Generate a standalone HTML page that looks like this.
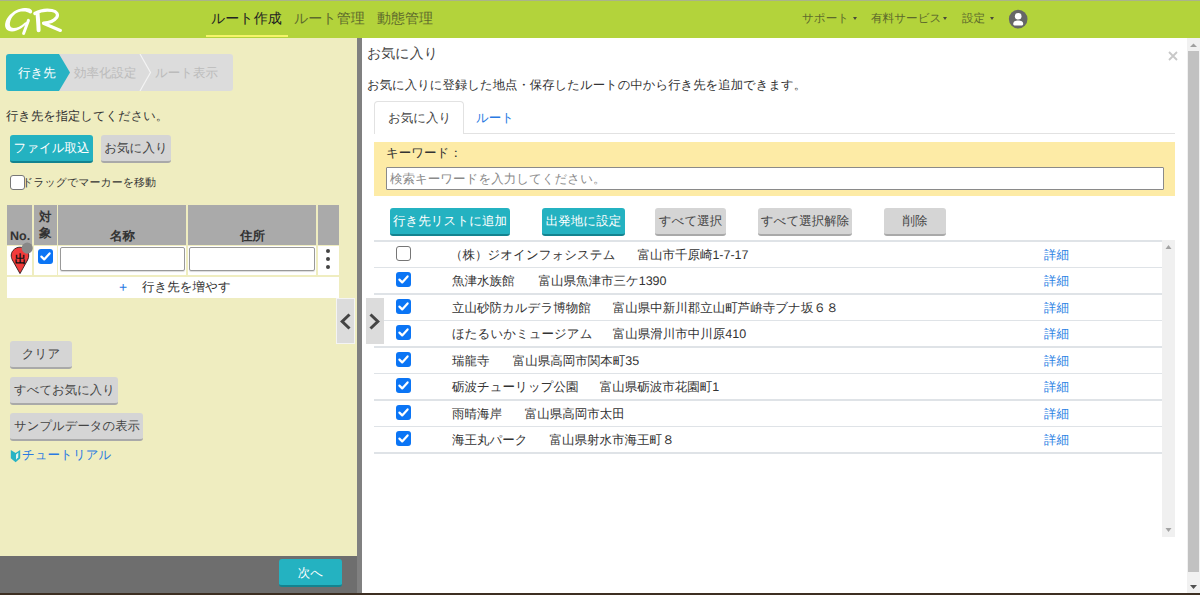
<!DOCTYPE html>
<html lang="ja">
<head>
<meta charset="utf-8">
<style>
*{box-sizing:border-box;margin:0;padding:0}
html,body{text-rendering:geometricPrecision;width:1200px;height:595px;overflow:hidden;background:#fff;font-family:"Liberation Sans",sans-serif;color:#333;font-size:13px}
.abs{position:absolute}
.t{position:absolute;white-space:nowrap;line-height:16px;font-size:12.5px}
#topline{left:0;top:0;width:1200px;height:1px;background:#aab38a}
#header{left:0;top:1px;width:1200px;height:37px;background:#b3d33b}
.nav{position:absolute;top:8px;font-size:14px;line-height:18px;white-space:nowrap}
.nav2{position:absolute;top:9.5px;font-size:11.6px;line-height:16px;white-space:nowrap;color:#5d6a2c}
.caret{position:absolute;top:16px;width:0;height:0;border-left:2.6px solid transparent;border-right:2.6px solid transparent;border-top:3.6px solid #4a4a3a}
#left{left:0;top:38px;width:357px;height:518px;background:#efedc0}
#divider{left:357px;top:38px;width:5px;height:555px;background:#808080}
#right{left:362px;top:38px;width:838px;height:555px;background:#fff}
#bottombar{left:0;top:556px;width:357px;height:37px;background:#6e6e6e}
#bottomline{left:0;top:593px;width:1200px;height:2px;background:#3d2f22}
.btn{position:absolute;border-radius:3px;white-space:nowrap;text-align:center;font-size:12.5px;line-height:16px}
.teal{background:#24b2c1;color:#fff;border-bottom:2px solid #13838f}
.gray{background:#d5d5d5;color:#444;border-bottom:2px solid #a9a9a9}
.cb{position:absolute;width:15px;height:15px;border-radius:3px;background:#0b75f5}
.cb svg{position:absolute;left:0;top:0}
.cbu{position:absolute;width:15px;height:15px;border-radius:3px;background:#fff;border:1px solid #767676}
.row{position:absolute;left:374px;width:788px;height:1.6px;background:#dfe3e7}
.link{color:#2b82e4}
</style>
</head>
<body>
<div id="topline" class="abs"></div>
<div id="header" class="abs">
  <svg class="abs" style="left:0;top:1px" width="70" height="36" viewBox="0 2 70 36">
    <g fill="none" stroke="#fff" stroke-linecap="round">
      <path d="M31.8,10.2 C30,7.2 24,7.4 18.5,9.3 C12,11.8 6.5,17 5.2,23.5 C4.5,27.5 6.5,31.4 12,31.4 C18,31.4 25,26 29.4,21.2 L25,22.4 C21,26 17,28 13.5,28 C10.5,28 9.4,25.5 10,22.6 C11,17 15.5,12.2 21,11.6 C25,11.2 27.5,11.8 29.6,13.2 C31.6,14 32.8,12 31.8,10.2 Z" fill="#fff" stroke="none"/>
      <path d="M28.4,20.4 L23.6,33.4" stroke-width="3"/>
      <path d="M37.6,14 C38,20 38.5,26 38.6,30.3" stroke-width="4"/>
      <path d="M34.8,13.5 C40,10.5 47,9.6 52,10.5 C57,11.5 58.6,14.5 56.6,17.5 C54,21 48,22.8 43.5,23" stroke-width="3.2"/>
      <path d="M44,23.6 L60.4,30.4" stroke-width="3.2"/>
    </g>
  </svg>
  <div class="nav" style="left:211px;color:#222">ルート作成</div>
  <div class="abs" style="left:206px;top:34px;width:82px;height:2px;background:#f5f56a"></div>
  <div class="nav" style="left:294px;color:#5d6a2c">ルート管理</div>
  <div class="nav" style="left:377px;color:#5d6a2c">動態管理</div>
  <div class="nav2" style="left:802px">サポート</div><div class="caret" style="left:853px"></div>
  <div class="nav2" style="left:871px">有料サービス</div><div class="caret" style="left:943px"></div>
  <div class="nav2" style="left:962px">設定</div><div class="caret" style="left:990px"></div>
  <svg class="abs" style="left:1008px;top:8px" width="20" height="20" viewBox="0 0 20 20">
    <circle cx="10.2" cy="10.1" r="9.3" fill="#666"/>
    <circle cx="10.2" cy="7.2" r="3.3" fill="#fff"/>
    <path d="M5.2,15 C5.2,12.2 7.4,11.4 10.2,11.4 C13,11.4 15.2,12.2 15.2,15 C15.2,16.2 14.2,16.6 13,16.6 L7.4,16.6 C6.2,16.6 5.2,16.2 5.2,15 Z" fill="#fff"/>
  </svg>
</div>

<div id="left" class="abs">
  <!-- stepper -->
  <svg class="abs" style="left:6px;top:16px" width="228" height="37" viewBox="0 0 228 37">
    <rect x="0" y="0" width="227" height="37" rx="3" fill="#dcdcdc"/>
    <path d="M3,0 L53,0 L64,18.5 L53,37 L3,37 Q0,37 0,34 L0,3 Q0,0 3,0 Z" fill="#27b3c4"/>
    <path d="M134,0 L144.5,18.5 L134,37" fill="none" stroke="#f4f4f4" stroke-width="1.2"/>
  </svg>
  <div class="t" style="left:18px;top:26.5px;color:#fff">行き先</div>
  <div class="t" style="left:74px;top:26.5px;color:#bbb">効率化設定</div>
  <div class="t" style="left:155px;top:26.5px;color:#bbb">ルート表示</div>

  <div class="t" style="left:6px;top:70px;color:#333;font-size:12.3px">行き先を指定してください。</div>
  <div class="btn teal" style="left:10px;top:97px;width:83px;height:28px;padding-top:5px">ファイル取込</div>
  <div class="btn gray" style="left:101px;top:97px;width:70px;height:28px;padding-top:5px">お気に入り</div>
  <div class="abs" style="left:10px;top:137px;width:15px;height:15px;border:1px solid #777;border-radius:3px;background:#fff"></div>
  <div class="t" style="left:22px;top:137px;font-size:11px;color:#333">ドラッグでマーカーを移動</div>

  <!-- table -->
  <div class="abs" style="left:7px;top:167px;width:332px;height:93px;background:#efedc0"></div>
  <div class="abs" style="left:7px;top:167px;width:25px;height:40px;background:#aaa"></div>
  <div class="abs" style="left:34px;top:167px;width:23px;height:40px;background:#aaa"></div>
  <div class="abs" style="left:58px;top:167px;width:128px;height:40px;background:#aaa"></div>
  <div class="abs" style="left:188px;top:167px;width:128px;height:40px;background:#aaa"></div>
  <div class="abs" style="left:318px;top:167px;width:21px;height:40px;background:#aaa"></div>
  <div class="t" style="left:10px;top:190px;font-weight:bold;color:#333">No.</div>
  <div class="t" style="left:39px;top:172px;font-weight:bold;color:#333;line-height:15.5px">対<br>象</div>
  <div class="t" style="left:110px;top:190px;font-weight:bold;color:#333">名称</div>
  <div class="t" style="left:240px;top:190px;font-weight:bold;color:#333">住所</div>

  <div class="abs" style="left:7px;top:208px;width:25px;height:29px;background:#fff"></div>
  <div class="abs" style="left:34px;top:208px;width:23px;height:29px;background:#fff"></div>
  <div class="abs" style="left:58px;top:208px;width:128px;height:29px;background:#fff"></div>
  <div class="abs" style="left:188px;top:208px;width:128px;height:29px;background:#fff"></div>
  <div class="abs" style="left:318px;top:208px;width:21px;height:29px;background:#fff"></div>
  <div class="abs" style="left:7px;top:239px;width:332px;height:21px;background:#fff"></div>

  <!-- pin -->
  <svg class="abs" style="left:9px;top:202px" width="26" height="36" viewBox="0 -4 26 36">
    <path d="M11,29.6 L3.4,16 C1.6,12.6 2,9 4,6.6 C6,4.2 8.4,3.2 11,3.2 C13.6,3.2 16,4.2 18,6.6 C20,9 20.4,12.6 18.6,16 Z" fill="#f23b3b" stroke="#2a1a1a" stroke-width="0.9"/>
    <text x="11.6" y="18.9" font-size="11.5" font-weight="bold" text-anchor="middle" fill="#111">出</text>
    <circle cx="18.2" cy="4.1" r="5.6" fill="#888"/>
  </svg>
  <div class="cb" style="left:38px;top:211px"><svg width="15" height="15" viewBox="0 0 15 15"><path d="M3.4,7.6 L6.2,10.4 L11.6,4.4" fill="none" stroke="#fff" stroke-width="2.2" stroke-linecap="round" stroke-linejoin="round"/></svg></div>
  <div class="abs" style="left:60px;top:209px;width:125px;height:24px;border:1px solid #999;border-radius:2px;background:#fff;box-shadow:0 1px 1px rgba(0,0,0,.15)"></div>
  <div class="abs" style="left:189px;top:209px;width:126px;height:24px;border:1px solid #999;border-radius:2px;background:#fff;box-shadow:0 1px 1px rgba(0,0,0,.15)"></div>
  <div class="abs" style="left:326px;top:211px;width:4px;height:4px;border-radius:50%;background:#444"></div>
  <div class="abs" style="left:326px;top:219px;width:4px;height:4px;border-radius:50%;background:#444"></div>
  <div class="abs" style="left:326px;top:227px;width:4px;height:4px;border-radius:50%;background:#444"></div>
  <div class="t" style="left:119px;top:241px;color:#2a7ae2;font-size:14px">+</div>
  <div class="t" style="left:142px;top:241px;color:#333">行き先を増やす</div>

  <!-- collapse arrow -->
  <div class="abs" style="left:336px;top:260px;width:19px;height:46px;background:#dcdcdc;border:1px solid #f4f4f4"></div>
  <svg class="abs" style="left:336px;top:260px" width="19" height="46" viewBox="0 0 19 46"><path d="M13.5,16.5 L6.2,23.5 L13.5,30.5" fill="none" stroke="#444" stroke-width="3"/></svg>

  <div class="btn gray" style="left:10px;top:303px;width:62px;height:28px;padding-top:5px">クリア</div>
  <div class="btn gray" style="left:10px;top:339px;width:108px;height:28px;padding-top:5px;padding-left:1px;font-size:12.4px">すべてお気に入り</div>
  <div class="btn gray" style="left:10px;top:375px;width:133px;height:28px;padding-top:5px;padding-left:1px;font-size:12.4px">サンプルデータの表示</div>
  <svg class="abs" style="left:10px;top:411px" width="11" height="14" viewBox="0 0 11 14">
    <path d="M0.8,1.1 L5.6,4.1 L10.2,1.1 L10.2,9.2 L5.6,13.2 L0.8,9.2 Z" fill="#27b3c4"/>
    <path d="M6,5.6 L8.4,3.6 L8.2,8.2 L6,10.7 Z" fill="#e2f4ee"/>
  </svg>
  <div class="t" style="left:22px;top:409px;color:#2a7ae2">チュートリアル</div>
</div>
<div id="bottombar" class="abs">
  <div class="btn teal" style="left:279px;top:3px;width:63px;height:28px;padding-top:6px">次へ</div>
</div>
<div id="divider" class="abs"></div>
<div id="right" class="abs">
  <div class="t" style="left:5px;top:6px;font-size:14px;line-height:18px;color:#444">お気に入り</div>
  <svg class="abs" style="left:806px;top:13px" width="10" height="10" viewBox="0 0 10 10"><path d="M1,1 L9,9 M9,1 L1,9" stroke="#c8c8c8" stroke-width="1.8"/></svg>
  <div class="t" style="left:5px;top:39px;color:#333;font-size:12.4px">お気に入りに登録した地点・保存したルートの中から行き先を追加できます。</div>
  <!-- tabs -->
  <div class="abs" style="left:12px;top:95px;width:801px;height:1px;background:#e2e2e2"></div>
  <div class="abs" style="left:12px;top:63px;width:90px;height:33px;background:#fff;border:1px solid #e2e2e2;border-bottom:none;border-radius:4px 4px 0 0"></div>
  <div class="t" style="left:26px;top:72px;color:#444">お気に入り</div>
  <div class="t" style="left:114px;top:72px;color:#2a7ae2">ルート</div>
  <!-- keyword box -->
  <div class="abs" style="left:12px;top:104px;width:801px;height:54px;background:#fdeba6"></div>
  <div class="t" style="left:24px;top:107px;color:#333">キーワード：</div>
  <div class="abs" style="left:24px;top:129px;width:778px;height:23px;background:#fff;border:1px solid #8a8a8a;border-radius:1px"></div>
  <div class="t" style="left:28px;top:133px;color:#8a8a8a">検索キーワードを入力してください。</div>
  <!-- action buttons -->
  <div class="btn teal" style="left:28px;top:170px;width:120px;height:28px;padding-top:5px">行き先リストに追加</div>
  <div class="btn teal" style="left:180px;top:170px;width:83px;height:28px;padding-top:5px">出発地に設定</div>
  <div class="btn gray" style="left:293px;top:170px;width:71px;height:28px;padding-top:5px">すべて選択</div>
  <div class="btn gray" style="left:396px;top:170px;width:94px;height:28px;padding-top:5px">すべて選択解除</div>
  <div class="btn gray" style="left:522px;top:170px;width:62px;height:28px;padding-top:5px">削除</div>
  <!-- list -->
  <div class="abs" style="left:800px;top:202px;width:13px;height:297px;background:#f0f0f0"></div>
  <svg class="abs" style="left:800px;top:202px" width="13" height="297" viewBox="0 0 13 297"><path d="M3.5,9 L9.5,9 L6.5,5 Z M3.5,288 L9.5,288 L6.5,292 Z" fill="#a3a3a3"/></svg>
  <div class="row" style="top:202.0px;left:12px"></div>
  <div class="cbu" style="left:34px;top:207.5px"></div>
  <div class="t" style="left:88px;top:208.5px;color:#333">（株）ジオインフォシステム</div><div class="t" style="left:275.4px;top:208.5px;color:#333">富山市千原崎1-7-17</div>
  <div class="t link" style="left:682px;top:208.5px">詳細</div>
  <div class="row" style="top:228.5px;left:12px"></div>
  <div class="cb" style="left:34px;top:234.0px"><svg width="15" height="15" viewBox="0 0 15 15"><path d="M3.4,7.6 L6.2,10.4 L11.6,4.4" fill="none" stroke="#fff" stroke-width="2.2" stroke-linecap="round" stroke-linejoin="round"/></svg></div>
  <div class="t" style="left:90px;top:235.0px;color:#333">魚津水族館</div><div class="t" style="left:176.4px;top:235.0px;color:#333">富山県魚津市三ケ1390</div>
  <div class="t link" style="left:682px;top:235.0px">詳細</div>
  <div class="row" style="top:255.0px;left:12px"></div>
  <div class="cb" style="left:34px;top:260.5px"><svg width="15" height="15" viewBox="0 0 15 15"><path d="M3.4,7.6 L6.2,10.4 L11.6,4.4" fill="none" stroke="#fff" stroke-width="2.2" stroke-linecap="round" stroke-linejoin="round"/></svg></div>
  <div class="t" style="left:90px;top:261.5px;color:#333">立山砂防カルデラ博物館</div><div class="t" style="left:250.8px;top:261.5px;color:#333">富山県中新川郡立山町芦峅寺ブナ坂６８</div>
  <div class="t link" style="left:682px;top:261.5px">詳細</div>
  <div class="row" style="top:281.5px;left:12px"></div>
  <div class="cb" style="left:34px;top:287.0px"><svg width="15" height="15" viewBox="0 0 15 15"><path d="M3.4,7.6 L6.2,10.4 L11.6,4.4" fill="none" stroke="#fff" stroke-width="2.2" stroke-linecap="round" stroke-linejoin="round"/></svg></div>
  <div class="t" style="left:90px;top:288.0px;color:#333">ほたるいかミュージアム</div><div class="t" style="left:250.8px;top:288.0px;color:#333">富山県滑川市中川原410</div>
  <div class="t link" style="left:682px;top:288.0px">詳細</div>
  <div class="row" style="top:308.0px;left:12px"></div>
  <div class="cb" style="left:34px;top:313.5px"><svg width="15" height="15" viewBox="0 0 15 15"><path d="M3.4,7.6 L6.2,10.4 L11.6,4.4" fill="none" stroke="#fff" stroke-width="2.2" stroke-linecap="round" stroke-linejoin="round"/></svg></div>
  <div class="t" style="left:90px;top:314.5px;color:#333">瑞龍寺</div><div class="t" style="left:150.8px;top:314.5px;color:#333">富山県高岡市関本町35</div>
  <div class="t link" style="left:682px;top:314.5px">詳細</div>
  <div class="row" style="top:334.5px;left:12px"></div>
  <div class="cb" style="left:34px;top:340.0px"><svg width="15" height="15" viewBox="0 0 15 15"><path d="M3.4,7.6 L6.2,10.4 L11.6,4.4" fill="none" stroke="#fff" stroke-width="2.2" stroke-linecap="round" stroke-linejoin="round"/></svg></div>
  <div class="t" style="left:90px;top:341.0px;color:#333">砺波チューリップ公園</div><div class="t" style="left:237.8px;top:341.0px;color:#333">富山県砺波市花園町1</div>
  <div class="t link" style="left:682px;top:341.0px">詳細</div>
  <div class="row" style="top:361.0px;left:12px"></div>
  <div class="cb" style="left:34px;top:366.5px"><svg width="15" height="15" viewBox="0 0 15 15"><path d="M3.4,7.6 L6.2,10.4 L11.6,4.4" fill="none" stroke="#fff" stroke-width="2.2" stroke-linecap="round" stroke-linejoin="round"/></svg></div>
  <div class="t" style="left:90px;top:367.5px;color:#333">雨晴海岸</div><div class="t" style="left:162.8px;top:367.5px;color:#333">富山県高岡市太田</div>
  <div class="t link" style="left:682px;top:367.5px">詳細</div>
  <div class="row" style="top:387.5px;left:12px"></div>
  <div class="cb" style="left:34px;top:393.0px"><svg width="15" height="15" viewBox="0 0 15 15"><path d="M3.4,7.6 L6.2,10.4 L11.6,4.4" fill="none" stroke="#fff" stroke-width="2.2" stroke-linecap="round" stroke-linejoin="round"/></svg></div>
  <div class="t" style="left:90px;top:394.0px;color:#333">海王丸パーク</div><div class="t" style="left:187.6px;top:394.0px;color:#333">富山県射水市海王町８</div>
  <div class="t link" style="left:682px;top:394.0px">詳細</div>
  <div class="row" style="top:414.0px;left:12px"></div>
  <!-- expand arrow -->
  <div class="abs" style="left:4px;top:260px;width:18px;height:46px;background:#dcdcdc"></div>
  <svg class="abs" style="left:4px;top:260px" width="18" height="46" viewBox="0 0 18 46"><path d="M4.5,16.5 L11.8,23.5 L4.5,30.5" fill="none" stroke="#444" stroke-width="3"/></svg>
  <!-- outer scrollbar -->
  <div class="abs" style="left:825px;top:0;width:13px;height:555px;background:#f1f1f1"></div>
  <div class="abs" style="left:826px;top:13px;width:11px;height:521px;background:#c1c1c1"></div>
  <svg class="abs" style="left:825px;top:0" width="13" height="555" viewBox="0 0 13 555"><path d="M3,9 L10,9 L6.5,5.5 Z" fill="#a0a0a0"/><path d="M3,547 L10,547 L6.5,551 Z" fill="#505050"/></svg>
</div>
<div id="bottomline" class="abs"></div>
</body>
</html>
